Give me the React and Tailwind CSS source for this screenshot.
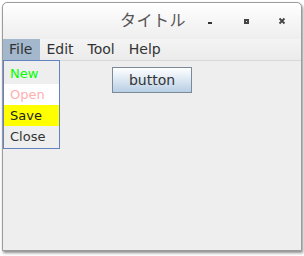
import React from "react";

// Swing風ウィンドウ（タイトルバー + メニューバー + 開いたFileメニュー）
const menus = ["File", "Edit", "Tool", "Help"];

const fileItems = [
  { label: "New", cls: "text-[#00ff00]" },
  { label: "Open", cls: "text-[#ffafaf] bg-white" },
  { label: "Save", cls: "text-[#222] bg-[#ffff00]" },
  { label: "Close", cls: "text-[#333]" },
];

export default function App() {
  return (
    <div
      className="w-[304px] h-[256px] bg-white pt-[2px] pl-[2px]"
      style={{ fontFamily: '"DejaVu Sans", "Noto Sans CJK JP", sans-serif' }}
    >
      <div className="relative w-[300px] h-[249px] border border-[#9c9c9c] rounded-t-[5px] bg-[#eeeeee] shadow-[1px_2px_3px_rgba(0,0,0,0.45)] flex flex-col">
        {/* タイトルバー */}
        <div className="h-[36px] rounded-t-[5px] bg-gradient-to-b from-white to-[#eeeeee] flex items-center">
          <div className="flex-1 pl-[117px] text-[16px] text-[#555] tracking-[0.5px]">
            タイトル
          </div>
          <div className="flex items-center pr-[15px] gap-[28px]">
            <div className="w-[8px] h-[8px] flex items-end justify-center pb-[1px]">
              <div className="w-[4px] h-[2px] bg-[#333]" />
            </div>
            <div className="w-[8px] h-[8px] flex items-center justify-center">
              <div className="w-[5px] h-[5px] border-[2px] border-[#444]" />
            </div>
            <svg width="8" height="8" viewBox="0 0 8 8" className="block">
              <path d="M1.5 1.5 L6.5 6.5 M6.5 1.5 L1.5 6.5" stroke="#444" strokeWidth="1.8" />
            </svg>
          </div>
        </div>

        {/* メニューバー */}
        <div className="h-[22px] flex bg-gradient-to-b from-[#f4f4f4] to-[#ebebeb] border-b border-[#d8d8d8] text-[14px] text-[#333]">
          {menus.map((m, i) => (
            <div
              key={m}
              className={
                "h-[21px] flex items-center pl-[6px] pr-[8px] " +
                (i === 0 ? "bg-[#a3b8cc]" : "")
              }
            >
              {m}
            </div>
          ))}
        </div>

        {/* 本体 */}
        <div className="flex-1 flex justify-center pt-[6px]">
          <button className="w-[80px] h-[26px] border border-[#7a8a99] bg-gradient-to-b from-white to-[#b8cfe5] text-[14px] text-[#333]">
            button
          </button>
        </div>

        {/* Fileメニューのポップアップ */}
        <div className="absolute left-0 top-[57px] w-[57px] h-[89px] border border-[#6382bf] bg-[#eeeeee] pt-[2px] text-[13px]">
          {fileItems.map((it) => (
            <div key={it.label} className={"h-[21px] flex items-center pl-[6px] " + it.cls}>
              {it.label}
            </div>
          ))}
        </div>
      </div>
    </div>
  );
}
